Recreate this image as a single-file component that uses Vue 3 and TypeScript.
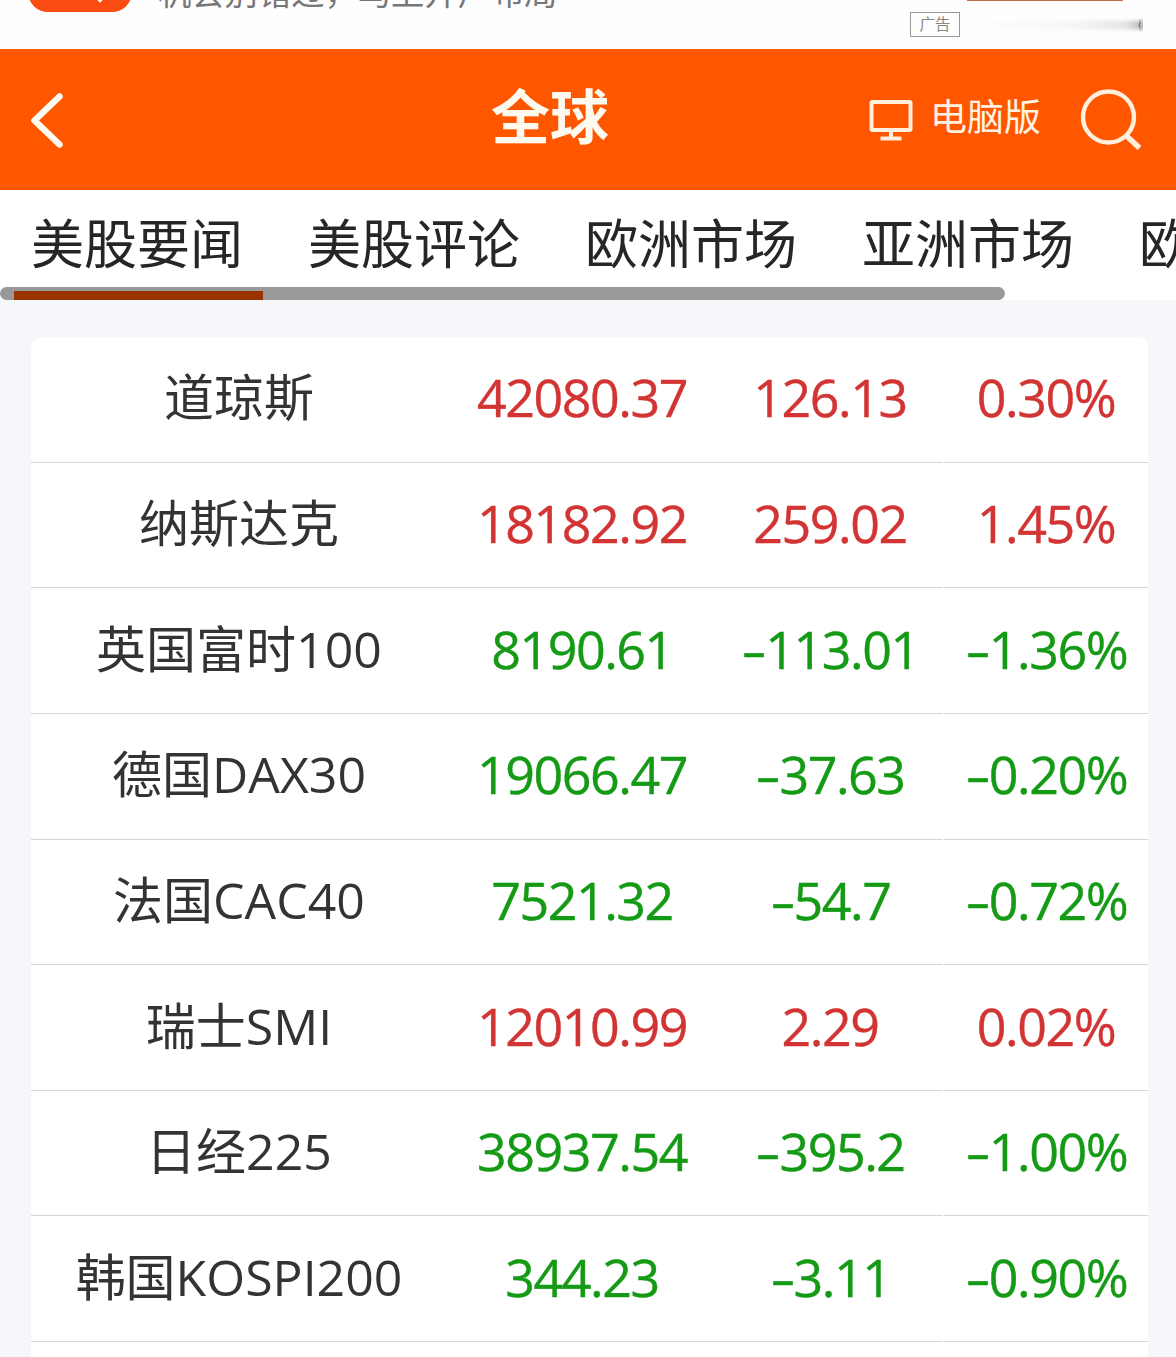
<script setup lang="ts">
interface Quote {
  name: string
  price: string
  change: string
  percent: string
  up: boolean
}

const tabs: string[] = ['美股要闻', '美股评论', '欧洲市场', '亚洲市场', '欧洲评论']

const quotes: Quote[] = [
  { name: '道琼斯', price: '42080.37', change: '126.13', percent: '0.30%', up: true },
  { name: '纳斯达克', price: '18182.92', change: '259.02', percent: '1.45%', up: true },
  { name: '英国富时100', price: '8190.61', change: '-113.01', percent: '-1.36%', up: false },
  { name: '德国DAX30', price: '19066.47', change: '-37.63', percent: '-0.20%', up: false },
  { name: '法国CAC40', price: '7521.32', change: '-54.7', percent: '-0.72%', up: false },
  { name: '瑞士SMI', price: '12010.99', change: '2.29', percent: '0.02%', up: true },
  { name: '日经225', price: '38937.54', change: '-395.2', percent: '-1.00%', up: false },
  { name: '韩国KOSPI200', price: '344.23', change: '-3.11', percent: '-0.90%', up: false },
]

const unsigned = (value: string): string => value.replace('-', '')
</script>

<template>
  <div class="page">
    <div class="promo">
      <div class="promo-badge"><i></i></div>
      <div class="promo-text">机会别错过，马上开户布局</div>
      <div class="promo-side">
        <div class="promo-line"></div>
        <div class="promo-row">
          <span class="ad-tag">广告</span>
          <span class="ad-fade"><svg width="5" height="16" viewBox="0 0 5 16" fill="none" stroke="#777" stroke-width="1.3"><path d="M4.5 2H2V6L1 8L2 10V14H4.5" /></svg></span>
        </div>
      </div>
    </div>

    <header class="header">
      <svg class="back" width="36" height="60" viewBox="0 0 36 60" fill="none" stroke="#fffaf0" stroke-width="6.5" stroke-linecap="round" stroke-linejoin="round">
        <path d="M31.5 6.5L6.5 30.5L31.5 54.5" />
      </svg>
      <h1>全球</h1>
      <div class="actions">
        <svg width="44" height="44" viewBox="0 0 44 44" fill="none" stroke="#ffefdc" stroke-width="4" stroke-linejoin="round">
          <rect x="2.5" y="4" width="39" height="28" rx="1" />
          <path d="M22 32V40M11.500 40.500H32.500" />
        </svg>
        <span class="pc">电脑版</span>
        <svg class="search" width="62" height="62" viewBox="0 0 62 62" fill="none" stroke="#ffefdc" stroke-width="4.400">
          <circle cx="28.500" cy="28" r="25.500" />
          <path d="M45.500 46L59.500 59" stroke-width="5.500" />
        </svg>
      </div>
    </header>

    <nav class="tabs">
      <div class="tab-list">
        <a v-for="tab in tabs" :key="tab">{{ tab }}</a>
      </div>
      <div class="scrollbar"><div class="active-line"></div></div>
    </nav>

    <main class="card">
      <div v-for="q in quotes" :key="q.name" class="row" :class="q.up ? 'up' : 'down'">
        <div class="cell name"><span>{{ q.name }}</span></div>
        <div class="cell"><span>{{ q.price }}</span></div>
        <div class="cell"><span v-if="!q.up" class="minus">-</span><span>{{ unsigned(q.change) }}</span></div>
        <div class="cell last"><span v-if="!q.up" class="minus">-</span><span>{{ unsigned(q.percent) }}</span></div>
      </div>
    </main>
  </div>
</template>

<style>
body {
  margin: 0;
  background: #f6f7fa;
}
</style>

<style scoped>
.page {
  width: 1176px;
  height: 1357px;
  overflow: hidden;
  background: #f6f7fa;
  font-family: "Open Sans", "Noto Sans CJK SC", sans-serif;
}
.promo {
  height: 49px;
  box-sizing: border-box;
  padding-left: 28px;
  display: flex;
  align-items: flex-start;
  overflow: hidden;
  background: #fffefe;
}
.promo-badge {
  width: 104px;
  height: 50px;
  margin-top: -38px;
  border-radius: 20px;
  background: #fa4c10;
  display: flex;
  justify-content: center;
  align-items: flex-start;
}
.promo-badge i {
  width: 8px;
  height: 8px;
  margin: 31px 0 0 40px;
  background: #fff;
  transform: rotate(45deg);
}
.promo-text {
  margin: -28px 0 0 26px;
  width: 752px;
  font-size: 33.3px;
  line-height: 40px;
  color: #777;
  white-space: nowrap;
}
.promo-line {
  width: 156px;
  height: 1px;
  margin-left: 57px;
  background: #c46b4c;
}
.promo-row {
  display: flex;
  align-items: center;
  margin-top: 11px;
}
.ad-tag {
  width: 50px;
  height: 25px;
  box-sizing: border-box;
  border: 1px solid #999;
  color: #888;
  font-size: 15.5px;
  line-height: 23px;
  text-align: center;
}
.ad-fade {
  width: 174px;
  height: 14px;
  margin-left: 9px;
  display: flex;
  justify-content: flex-end;
  align-items: center;
  background: linear-gradient(90deg, #fffefe, #f6f6f6 60%, #e6e6e6 90%, #bbb);
  -webkit-mask-image: linear-gradient(transparent, #000 35%, #000 65%, transparent);
  mask-image: linear-gradient(transparent, #000 35%, #000 65%, transparent);
}
.header {
  height: 141px;
  box-sizing: border-box;
  padding: 0 34px 0 28px;
  display: grid;
  grid-template-columns: 1fr auto 1fr;
  align-items: center;
  background: #ff5600;
}
.header h1 {
  margin: -8px 0 0 -70px;
  font-size: 59px;
  line-height: 80px;
  font-weight: 700;
  color: #fffaf0;
}
.back {
  margin-top: 1px;
}
.actions {
  display: flex;
  align-items: center;
  justify-content: flex-end;
  color: #fff3e4;
}
.pc {
  margin: -5px 39px 0 17px;
  font-size: 37px;
  line-height: 50px;
  white-space: nowrap;
}
.search {
  flex: none;
}
.tabs {
  height: 110px;
  background: #fff;
  overflow: hidden;
}
.tab-list {
  height: 97px;
  padding-left: 31px;
  display: flex;
  gap: 65px;
}
.tab-list a {
  flex: none;
  width: 212px;
  font-size: 53px;
  line-height: 107px;
  color: #262626;
  white-space: nowrap;
}
.scrollbar {
  width: 1005px;
  height: 13px;
  box-sizing: border-box;
  padding: 4px 0 0 14px;
  border-radius: 7px;
  background: #999;
}
.active-line {
  width: 249px;
  height: 9px;
  background: #993300;
}
.card {
  width: 1117px;
  margin: 37px 0 0 31px;
  border-radius: 10px 10px 0 0;
  background: #fff;
  height: 1020px;
}
.row {
  height: 125.65px;
  display: grid;
  grid-template-columns: 416px 270px 226px 205px;
}
.cell {
  display: flex;
  align-items: center;
  justify-content: center;
  box-sizing: border-box;
  border-bottom: 1px solid #d6d6d6;
  font-size: 52px;
  line-height: 60px;
  letter-spacing: -1.5px;
  padding-bottom: 4px;
  white-space: nowrap;
  -webkit-text-stroke: 0.4px currentColor;
}
.cell.last {
  margin-left: 1px;
}
.minus {
  width: 24px;
  text-align: center;
  transform: scaleX(1.5);
}
.up {
  color: #d23434;
}
.down {
  color: #149a14;
}
.cell.name {
  font-size: 50px;
  letter-spacing: 0;
  color: #333;
  -webkit-text-stroke: 0;
}
</style>
